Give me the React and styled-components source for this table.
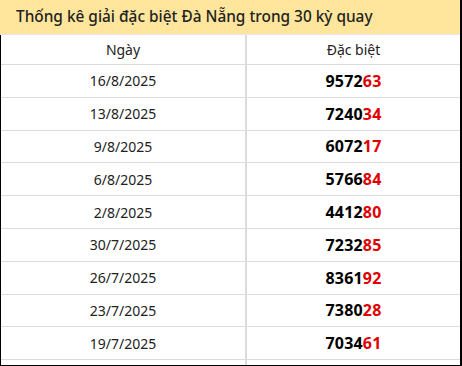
import React from 'react';
import styled, { createGlobalStyle } from 'styled-components';

const GlobalStyle = createGlobalStyle`
  html, body { margin: 0; padding: 0; background: #fff; }
  body { font-family: "Noto Sans", "Open Sans", sans-serif; }
`;

const Frame = styled.div`
  width: 462px;
  height: 366px;
  box-sizing: border-box;
  overflow: hidden;
  border-right: 2px solid #000;
  border-bottom: 1px solid #000;
  display: flex;
  flex-direction: column;
`;

const Title = styled.div`
  height: 35px;
  flex: none;
  box-sizing: border-box;
  padding: 0 0 2px 16px;
  background: #ffe69c;
  border-bottom: 1px solid #e6e6e6;
  display: flex;
  align-items: center;
  font-size: 15.4px;
  font-weight: 500;
  color: #222;
`;

const Body = styled.div`
  flex: 1;
  border-left: 1px solid #000;
`;

const Row = styled.div`
  display: grid;
  grid-template-columns: 244px 1fr;
  height: ${({ head }) => (head ? '30px' : '32.8px')};
  border-bottom: 1px solid #dcdcdc;
  box-sizing: border-box;
`;

const Cell = styled.div`
  display: flex;
  align-items: center;
  justify-content: center;
  font-size: 14px;
  color: #222;
  & + & { border-left: 2px solid #dcdcdc; }
`;

const Number = styled.span`
  font-size: 16px;
  font-weight: 700;
  color: #000;
  letter-spacing: 0.2px;
`;

const Tail = styled.span`
  color: #e00000;
`;

const rows = [
  ['16/8/2025', '957263'],
  ['13/8/2025', '724034'],
  ['9/8/2025', '607217'],
  ['6/8/2025', '576684'],
  ['2/8/2025', '441280'],
  ['30/7/2025', '723285'],
  ['26/7/2025', '836192'],
  ['23/7/2025', '738028'],
  ['19/7/2025', '703461'],
];

export default function App() {
  return (
    <>
      <GlobalStyle />
      <Frame>
        <Title>Thống kê giải đặc biệt Đà Nẵng trong 30 kỳ quay</Title>
        <Body>
          <Row head>
            <Cell>Ngày</Cell>
            <Cell>Đặc biệt</Cell>
          </Row>
          {rows.map(([date, num]) => (
            <Row key={date}>
              <Cell>{date}</Cell>
              <Cell>
                <Number>
                  {num.slice(0, 4)}
                  <Tail>{num.slice(4)}</Tail>
                </Number>
              </Cell>
            </Row>
          ))}
          <Row>
            <Cell />
            <Cell />
          </Row>
        </Body>
      </Frame>
    </>
  );
}
